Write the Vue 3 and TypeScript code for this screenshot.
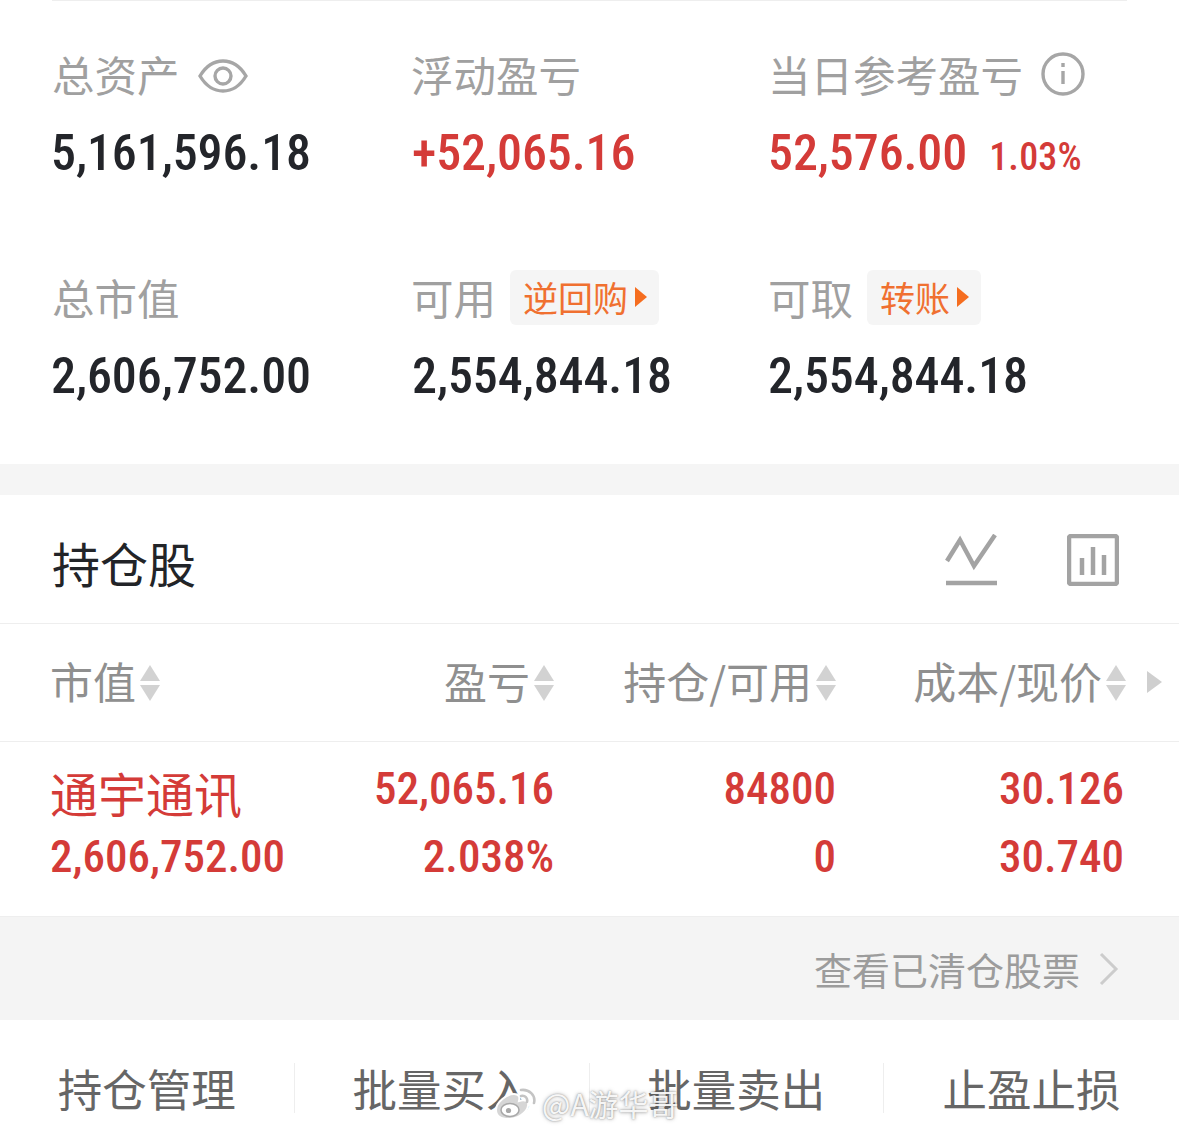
<template>
  <div class="page">
    <section class="summary">
      <div v-for="item in summary" :key="item.label" class="cell">
        <div class="label">
          <span>{{ item.label }}</span>
          <svg v-if="item.icon === 'eye'" class="eye" width="50" height="36" viewBox="0 0 50 36" fill="none" stroke="#a6a6a6" stroke-width="3.4">
            <path d="M2 18C8 8 16 3 25 3s17 5 23 15c-6 10-14 15-23 15S8 28 2 18z" />
            <circle cx="25" cy="18" r="8" />
          </svg>
          <svg v-if="item.icon === 'info'" class="info" width="44" height="44" viewBox="0 0 44 44" fill="none" stroke="#a6a6a6" stroke-width="3.4">
            <circle cx="22" cy="22" r="20" />
            <path d="M22 19v13M22 11v4" />
          </svg>
          <span v-if="item.tag" class="tag">{{ item.tag }}<i class="tag-arrow"></i></span>
        </div>
        <div class="value" :class="{ red: item.red }">
          {{ item.value }}<small v-if="item.pct">{{ item.pct }}</small>
        </div>
      </div>
    </section>

    <div class="band"></div>

    <section class="title-row">
      <h2>持仓股</h2>
      <div class="tools">
        <svg width="52" height="52" viewBox="0 0 52 52" fill="none" stroke="#a3a3a3" stroke-width="4.5">
          <path d="M2 27L15 6l14 26L50 1" />
          <path d="M1 49h51" />
        </svg>
        <svg width="52" height="52" viewBox="0 0 52 52" fill="none" stroke="#a3a3a3" stroke-width="4.5">
          <rect x="2" y="2" width="48" height="48" rx="2" />
          <path d="M15 24v17M26 13v28M37 21v20" />
        </svg>
      </div>
    </section>

    <section class="table-head">
      <div v-for="h in headers" :key="h" class="th">
        <span>{{ h }}</span>
        <span class="sort"><i class="up"></i><i class="down"></i></span>
      </div>
      <i class="more"></i>
    </section>

    <section class="table-row">
      <div class="td first">
        <div class="name">通宇通讯</div>
        <div>2,606,752.00</div>
      </div>
      <div class="td"><div>52,065.16</div><div>2.038%</div></div>
      <div class="td"><div>84800</div><div>0</div></div>
      <div class="td"><div>30.126</div><div>30.740</div></div>
    </section>

    <section class="cleared">
      <span>查看已清仓股票</span>
      <svg width="20" height="34" viewBox="0 0 20 34" fill="none" stroke="#cccccc" stroke-width="3">
        <path d="M2 2l15 15L2 32" />
      </svg>
    </section>

    <section class="actions">
      <div v-for="a in actions" :key="a" class="action">{{ a }}</div>
    </section>

    <div class="watermark">
      <svg class="wb" width="44" height="32" viewBox="0 0 44 32" fill="none">
        <path d="M3 22C3 14 14 6 21 6c5 0 6 3 5 7 6-2 10 0 9 5-1 7-11 13-19 13C8 31 3 28 3 22z" fill="#d6d6d6" stroke="#ffffff" stroke-width="2" />
        <ellipse cx="17" cy="22" rx="9" ry="6.5" fill="#ffffff" stroke="#a8a8a8" stroke-width="1.5" />
        <circle cx="15.5" cy="22.5" r="2.6" fill="#a8a8a8" />
        <path d="M28 8c4-1 7 2 6 6M28 2c8-1 15 5 13 13" stroke="#c4c4c4" stroke-width="2.6" stroke-linecap="round" />
      </svg>
      <span>@A游华哥</span>
    </div>
  </div>
</template>

<script setup lang="ts">
interface SummaryItem {
  label: string;
  value: string;
  red?: boolean;
  pct?: string;
  icon?: 'eye' | 'info';
  tag?: string;
}

const summary: SummaryItem[] = [
  { label: '总资产', value: '5,161,596.18', icon: 'eye' },
  { label: '浮动盈亏', value: '+52,065.16', red: true },
  { label: '当日参考盈亏', value: '52,576.00', red: true, pct: '1.03%', icon: 'info' },
  { label: '总市值', value: '2,606,752.00' },
  { label: '可用', value: '2,554,844.18', tag: '逆回购' },
  { label: '可取', value: '2,554,844.18', tag: '转账' }
];

const headers = ['市值', '盈亏', '持仓/可用', '成本/现价'];
const actions = ['持仓管理', '批量买入', '批量卖出', '止盈止损'];
</script>

<style>
html,
body {
  margin: 0;
  background: #fff;
}
</style>

<style scoped>
.page {
  position: relative;
  width: 1179px;
  height: 1133px;
  overflow: hidden;
  background: #fff;
  font-family: "Noto Sans CJK SC", "Noto Sans", sans-serif;
}

.summary {
  height: 464px;
  box-sizing: border-box;
  margin: 0 52px;
  border-top: 1px solid #eeeeee;
  display: grid;
  grid-template-columns: 360px 358px 1fr;
  grid-auto-rows: 223px;
  padding-top: 45px;
}

.label {
  display: flex;
  align-items: center;
  height: 56px;
  font-size: 42.5px;
  line-height: 56px;
  color: #a0a0a0;
}

.cell:nth-child(3n + 2) .label {
  margin-left: -1px;
}

.cell:nth-child(3n) .label {
  margin-left: -2px;
}

.cell:nth-child(3n + 2) .value {
  margin-left: 0;
}

.cell:nth-child(3n) .value {
  margin-left: -2px;
}

.eye {
  margin-left: 18px;
  margin-top: 3px;
}

.info {
  margin-left: 18px;
  margin-top: 0;
}

.tag {
  display: flex;
  align-items: center;
  height: 55px;
  margin-left: 14px;
  padding: 0 12px 0 13px;
  background: #f5f5f5;
  border-radius: 6px;
  font-size: 35px;
  color: #f07030;
}

.tag-arrow {
  width: 0;
  height: 0;
  margin-left: 7px;
  border-left: 12px solid #f56d1f;
  border-top: 10px solid transparent;
  border-bottom: 10px solid transparent;
}

.value {
  margin-top: 20px;
  margin-left: -1px;
  height: 62px;
  font-family: Roboto, "Liberation Sans", sans-serif;
  font-size: 50px;
  font-stretch: 85%;
  font-weight: 500;
  line-height: 62px;
  letter-spacing: -0.1px;
  color: #23252a;
  white-space: nowrap;
}

.value small {
  margin-left: 22px;
  font-size: 38px;
  letter-spacing: 0.2px;
}

.red {
  color: #d43b38;
}

.band {
  height: 31px;
  background: #f5f5f5;
}

.title-row {
  height: 129px;
  box-sizing: border-box;
  padding: 6px 60px 0 52px;
  display: flex;
  align-items: center;
  justify-content: space-between;
  border-bottom: 1px solid #eeeeee;
}

.title-row h2 {
  margin: 0;
  font-size: 48px;
  font-weight: 400;
  color: #222428;
}

.tools {
  display: flex;
  gap: 70px;
  margin-top: -5px;
}

.table-head {
  position: relative;
  height: 118px;
  box-sizing: border-box;
  padding-right: 53px;
  display: grid;
  grid-template-columns: 302px 252px 282px 290px;
  align-items: center;
  border-bottom: 1px solid #eeeeee;
}

.th {
  display: flex;
  justify-content: flex-end;
  align-items: center;
  margin-top: -6px;
  font-size: 43px;
  color: #8f8f8f;
}

.th:first-child {
  justify-content: flex-start;
  padding-left: 50px;
}

.sort {
  display: flex;
  flex-direction: column;
  gap: 4px;
  margin-left: 4px;
  margin-top: 6px;
}

.sort i {
  width: 0;
  height: 0;
  border-left: 10px solid transparent;
  border-right: 10px solid transparent;
}

.sort .up {
  border-bottom: 16px solid #d2d2d2;
}

.sort .down {
  border-top: 16px solid #d2d2d2;
}

.more {
  position: absolute;
  right: 17px;
  top: 47px;
  width: 0;
  height: 0;
  border-left: 15px solid #cfcfcf;
  border-top: 11px solid transparent;
  border-bottom: 11px solid transparent;
}

.table-row {
  height: 175px;
  box-sizing: border-box;
  padding: 13px 55px 0 50px;
  display: grid;
  grid-template-columns: 252px 252px 282px 288px;
  border-bottom: 1px solid #eeeeee;
  font-family: Roboto, "Liberation Sans", sans-serif;
  font-size: 45px;
  font-stretch: 85%;
  font-weight: 500;
  line-height: 68px;
  letter-spacing: 0;
  color: #d43b38;
  text-align: right;
}

.first {
  text-align: left;
}

.name {
  font-family: "Noto Sans CJK SC", sans-serif;
  font-size: 48px;
  font-weight: 400;
  letter-spacing: 0;
  margin-top: 3px;
  margin-bottom: -3px;
}

.cleared {
  height: 103px;
  box-sizing: border-box;
  background: #f4f4f4;
  padding-right: 60px;
  display: flex;
  align-items: center;
  justify-content: flex-end;
  gap: 19px;
  font-size: 38px;
  color: #9c9c9c;
}

.actions {
  height: 113px;
  box-sizing: border-box;
  padding-top: 43px;
  display: grid;
  grid-template-columns: repeat(4, 1fr);
  align-items: start;
}

.action {
  height: 50px;
  line-height: 50px;
  text-align: center;
  font-size: 44.5px;
  color: #666666;
  border-right: 1px solid #eeeeee;
}

.action:last-child {
  border-right: 0;
}

.watermark {
  position: absolute;
  left: 493px;
  top: 1084px;
  display: flex;
  align-items: center;
  gap: 5px;
  font-size: 30px;
  line-height: 38px;
  color: rgba(255, 255, 255, 0.92);
  text-shadow: 0 0 2px rgba(80, 80, 80, 0.6), 0 0 4px rgba(80, 80, 80, 0.4);
}

.wb {
  margin-top: 1px;
}
</style>
